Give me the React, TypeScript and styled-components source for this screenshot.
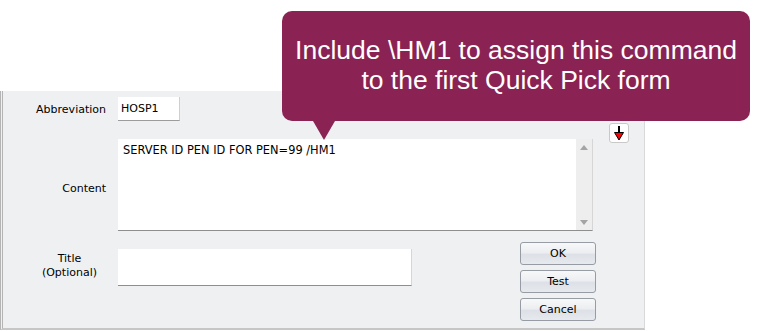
import styled, { createGlobalStyle } from 'styled-components'

const GlobalStyle = createGlobalStyle`
  html, body {
    margin: 0;
    padding: 0;
    background: #ffffff;
  }
  body {
    font-family: 'DejaVu Sans', Tahoma, sans-serif;
    font-size: 11px;
    color: #000000;
  }
`

const App = () => {
  return (
    <Page>
      <GlobalStyle />
      <Panel>
        <FormGrid>
          <Label>Abbreviation</Label>
          <AbbrevInput>HOSP1</AbbrevInput>
          <ArrowButton>
            <svg width="18" height="18" viewBox="0 0 18 18">
              <rect x="8" y="2" width="2" height="7" fill="#000" />
              <path d="M4.5 8.5 L13.5 8.5 L9 16 Z" fill="#ff0000" stroke="#000" strokeWidth="1" strokeLinejoin="miter" />
            </svg>
          </ArrowButton>
          <Label $padTop={6}>Content</Label>
          <ContentBox>
            <ContentText>SERVER ID PEN ID FOR PEN=99 /HM1</ContentText>
            <Scrollbar>
              <ScrollArrow $dir="up" />
              <ScrollArrow $dir="down" />
            </Scrollbar>
          </ContentBox>
        </FormGrid>
        <BottomRow>
          <TitleGroup>
            <TitleLabel>
              <span>
                Title
                <br />
                (Optional)
              </span>
            </TitleLabel>
            <TitleInput />
          </TitleGroup>
          <ButtonStack>
            <DialogButton>OK</DialogButton>
            <DialogButton>Test</DialogButton>
            <DialogButton>Cancel</DialogButton>
          </ButtonStack>
        </BottomRow>
      </Panel>
      <Callout>
        Include \HM1 to assign this command
        <br />
        to the first Quick Pick form
      </Callout>
    </Page>
  )
}

export default App

const Page = styled.div`
  position: relative;
  width: 762px;
  height: 331px;
  overflow: hidden;
  padding-top: 91px;
  box-sizing: border-box;
`

const Panel = styled.div`
  width: 645px;
  height: 239px;
  box-sizing: border-box;
  background: #eff0f2;
  border-left: 3px double #b4b4b4;
  border-right: 1px solid #d9d9d9;
  border-bottom: 2px solid #c6c6c6;
  padding-top: 6px;
`

const FormGrid = styled.div`
  display: grid;
  grid-template-columns: 103px 475px 40px;
  grid-template-rows: 24px 92px;
  column-gap: 12px;
  row-gap: 18px;
`

const Label = styled.div<{ $padTop?: number }>`
  display: flex;
  align-items: center;
  justify-content: flex-end;
  padding-top: ${({ $padTop }) => $padTop || 0}px;
`

const AbbrevInput = styled.div`
  width: 62px;
  height: 24px;
  box-sizing: border-box;
  background: #ffffff;
  border-right: 1px solid #cfcfcf;
  border-bottom: 1px solid #9c9c9c;
  padding-left: 3px;
  display: flex;
  align-items: center;
`

const ArrowButton = styled.div`
  grid-column: 3;
  grid-row: 1 / span 2;
  align-self: start;
  margin-top: 26px;
  margin-left: 4px;
  width: 20px;
  height: 20px;
  box-sizing: border-box;
  background: #ffffff;
  border: 1px solid #c9c9c9;
  border-radius: 3px;
  display: flex;
  align-items: center;
  justify-content: center;

  svg {
    flex: none;
  }
`

const ContentBox = styled.div`
  display: flex;
  background: #ffffff;
  border-right: 1px solid #d6d6d6;
  border-bottom: 1px solid #8e8e8e;
  box-sizing: border-box;
`

const ContentText = styled.div`
  flex: 1;
  padding: 4px 5px;
  font-size: 11.4px;
`

const Scrollbar = styled.div`
  width: 16px;
  background: #eeeeee;
  display: flex;
  flex-direction: column;
  justify-content: space-between;
  align-items: center;
  padding: 6px 0 5px;
`

const ScrollArrow = styled.div<{ $dir: 'up' | 'down' }>`
  width: 0;
  height: 0;
  border-left: 4px solid transparent;
  border-right: 4px solid transparent;
  ${({ $dir }) =>
    $dir === 'up' ? 'border-bottom: 5px solid #a4a4a4;' : 'border-top: 5px solid #a4a4a4;'}
`

const BottomRow = styled.div`
  display: flex;
  margin-top: 11px;
`

const TitleGroup = styled.div`
  display: flex;
  align-items: center;
  gap: 12px;
  margin-top: 7px;
  height: 37px;
  align-self: flex-start;
`

const TitleLabel = styled.div`
  width: 103px;
  box-sizing: border-box;
  padding-right: 9px;
  display: flex;
  justify-content: flex-end;
  text-align: center;
  line-height: 14px;
  padding-bottom: 3px;
`

const TitleInput = styled.div`
  width: 294px;
  height: 37px;
  box-sizing: border-box;
  background: #ffffff;
  border-right: 1px solid #d6d6d6;
  border-bottom: 1px solid #8e8e8e;
`

const ButtonStack = styled.div`
  display: flex;
  flex-direction: column;
  gap: 5px;
  margin-left: 108px;
`

const DialogButton = styled.div`
  width: 76px;
  height: 23px;
  box-sizing: border-box;
  border: 1px solid #979ca4;
  border-radius: 3px;
  background: linear-gradient(#f7f8fa 0%, #eceef1 45%, #dde1e7 55%, #e6e9ed 100%);
  display: flex;
  align-items: center;
  justify-content: center;
`

const Callout = styled.div`
  position: absolute;
  left: 282px;
  top: 11px;
  width: 468px;
  height: 110px;
  box-sizing: border-box;
  background: #8a2253;
  border-radius: 10px;
  color: #ffffff;
  font-family: 'Liberation Sans', Arial, sans-serif;
  font-size: 26.5px;
  line-height: 30.5px;
  text-align: center;
  display: flex;
  align-items: center;
  justify-content: center;
  padding-bottom: 2px;

  &::after {
    content: '';
    position: absolute;
    top: 100%;
    left: 31px;
    border-left: 11px solid transparent;
    border-right: 11px solid transparent;
    border-top: 19px solid #8a2253;
  }
`
